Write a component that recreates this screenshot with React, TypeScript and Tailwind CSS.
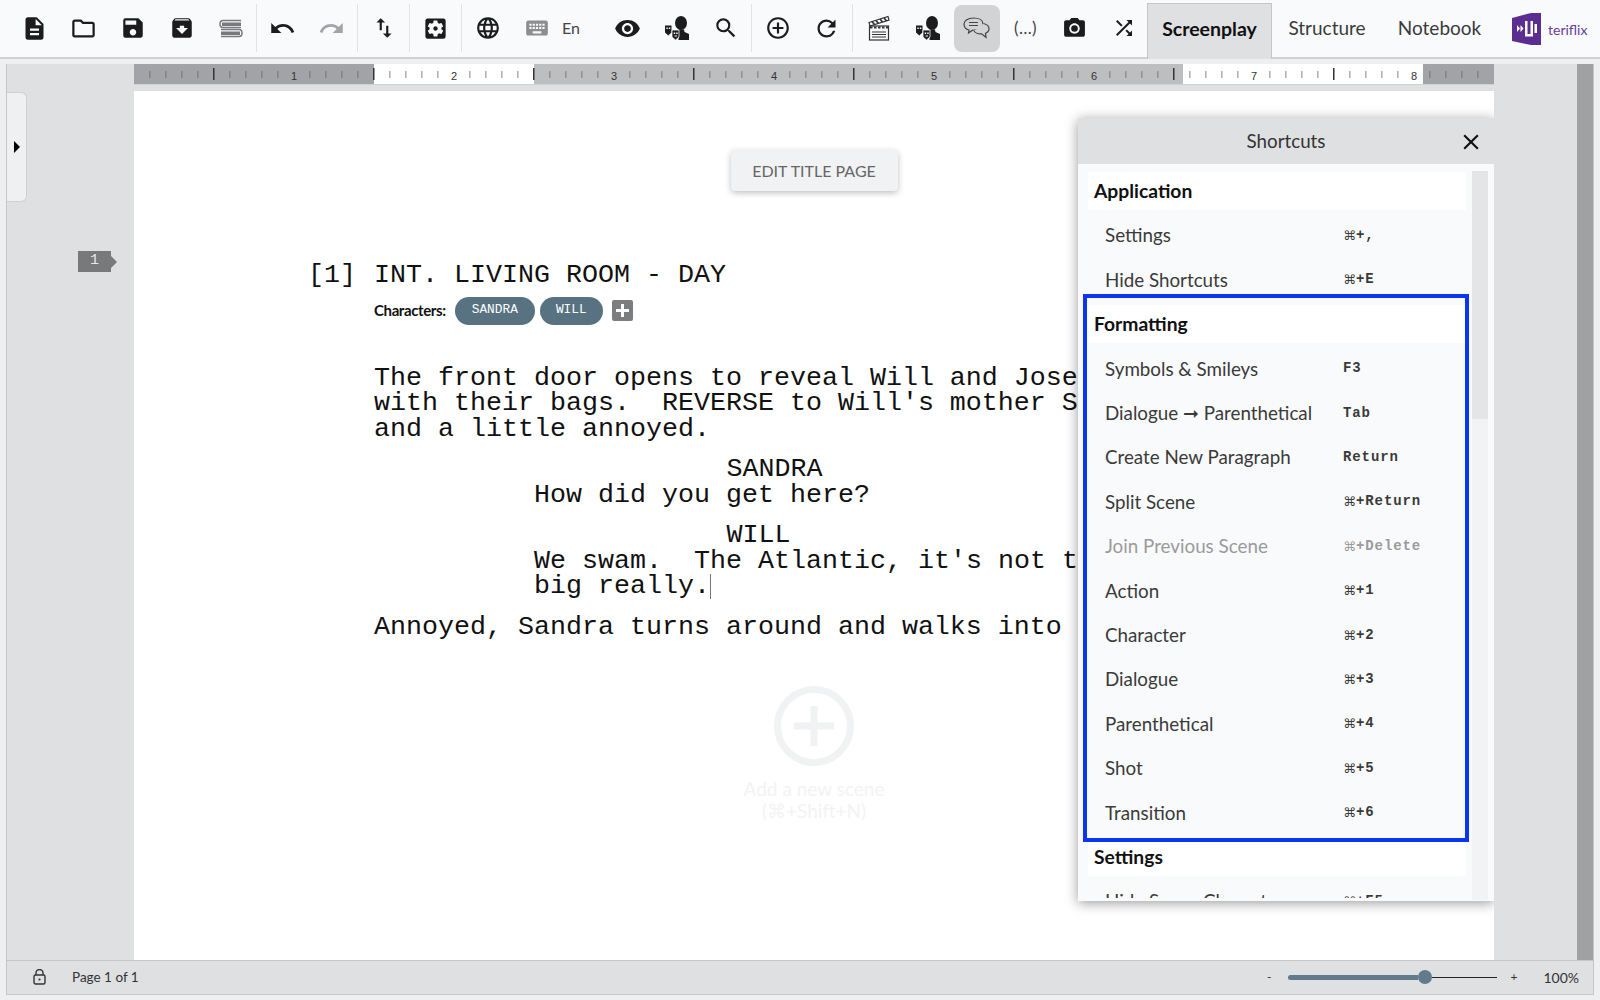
import React from 'react';
import {
  MdDescription,
  MdOutlineFolder,
  MdSave,
  MdArchive,
  MdUndo,
  MdRedo,
  MdSwapVert,
  MdSettingsApplications,
  MdLanguage,
  MdKeyboard,
  MdRemoveRedEye,
  MdSearch,
  MdAddCircleOutline,
  MdRefresh,
  MdPhotoCamera,
  MdShuffle,
  MdClose,
} from 'react-icons/md';

const uiFont = "font-['Lato','Open_Sans',sans-serif]";
const monoFont = "font-['Liberation_Mono','DejaVu_Sans',monospace]";

type Row = { label: string; keys?: string; muted?: boolean };

const shortcuts: Row[] = [
  { label: 'Application' },
  { label: 'Settings', keys: '+,' },
  { label: 'Hide Shortcuts', keys: '+E' },
  { label: 'Formatting' },
  { label: 'Symbols & Smileys', keys: 'F3' },
  { label: 'Dialogue ➞ Parenthetical', keys: 'Tab' },
  { label: 'Create New Paragraph', keys: 'Return' },
  { label: 'Split Scene', keys: '+Return' },
  { label: 'Join Previous Scene', keys: '+Delete', muted: true },
  { label: 'Action', keys: '+1' },
  { label: 'Character', keys: '+2' },
  { label: 'Dialogue', keys: '+3' },
  { label: 'Parenthetical', keys: '+4' },
  { label: 'Shot', keys: '+5' },
  { label: 'Transition', keys: '+6' },
  { label: 'Settings' },
  { label: 'Hide Scene Characters', keys: '+F5' },
];

const BooksIcon = () => (
  <svg width="24" height="19" viewBox="0 0 24 19" fill="none" stroke="#77797b">
    <path d="M22 1.500H4C0 1.500 0 8.500 4 8.500h18" strokeWidth="1.500" />
    <rect x="3" y="3.500" width="19" height="3.500" fill="#77797b" stroke="none" />
    <path d="M2 10.500h18c4 0 4 7 0 7H2" strokeWidth="1.500" />
    <rect x="2" y="12.500" width="19" height="3.500" fill="#77797b" stroke="none" />
  </svg>
);

const MasksPersonIcon = () => (
  <svg width="24" height="24" viewBox="0 0 24 24" fill="#1c1c1e">
    <ellipse cx="16" cy="7" rx="6" ry="7" />
    <path d="M13 13.500h6l.5 2.500 4.500 2v6H13.500l.5-8z" />
    <path d="M0 9.500h6.500v7l-3.200 3-3.300-3z" />
    <path d="M7 14h7v7l-3.500 3L7 21z" stroke="#f9fafc" strokeWidth="0.800" />
    <rect x="1.300" y="11.500" width="1.500" height="1.500" fill="#f9fafc" />
    <rect x="3.800" y="11.500" width="1.500" height="1.500" fill="#f9fafc" />
    <rect x="8.700" y="16.500" width="1.500" height="1.500" fill="#f9fafc" />
    <rect x="11.200" y="16.500" width="1.500" height="1.500" fill="#f9fafc" />
    <rect x="9.500" y="19.500" width="2.500" height="1" fill="#f9fafc" />
  </svg>
);

const ClapperIcon = () => (
  <svg width="22" height="26" viewBox="0 0 22 26" fill="none" stroke="#333" strokeWidth="1.200">
    <path d="M1 7.500L20 1.500l1 3.500-19 6z" fill="#fff" />
    <path d="M4 6.500l2.500 3M8 5.500l2.500 3M12 4l2.500 3M16 3l2.500 3" strokeWidth="1.800" />
    <rect x="1.500" y="11" width="19" height="14" />
    <path d="M2 12.500h18" strokeWidth="2" strokeDasharray="2.500 1.500" />
    <path d="M4 17h14M4 19.500h14M4 22h14" />
  </svg>
);

const ChatIcon = () => (
  <svg width="27" height="24" viewBox="0 0 27 24" fill="none" stroke="#444" strokeWidth="1.200">
    <path d="M10.500 2C5 2 1 4.500 1 8s3 5.500 5 6l-.5 3 4-2.800c6 .3 10.500-2.200 10.500-6.200S16 2 10.500 2z" fill="#d2d3d5" />
    <path d="M6 6.500h9M6 9.500h9" />
    <path d="M20.500 7.500c3.500.8 5.500 2.800 5.500 5.300 0 2.200-1.500 3.700-3.500 4.500l.5 4-4.500-3.500c-3 .2-6-.6-7.500-2.800" fill="#d2d3d5" />
  </svg>
);

const LockIcon = () => (
  <svg width="13" height="16" viewBox="0 0 13 16" fill="none" stroke="#333" strokeWidth="1.400">
    <path d="M3 6V4a3.500 3.500 0 0 1 7 0v2" />
    <rect x="1" y="6" width="11" height="9" rx="1.500" />
    <circle cx="6.500" cy="10.500" r="1.100" fill="#333" stroke="none" />
  </svg>
);

const Logo = () => (
  <svg width="30" height="32" viewBox="0 0 30 32">
    <path d="M0 5l19-5h10v32H19L0 28z" fill="#5c2d91" />
    <path d="M5 12v7l3-3.500zM8.500 12v7l3-3.500z" fill="#fff" />
    <path d="M13 8h2.500v13h3V8H21v15.500h-8zM22.500 11H25v9h-2.500z" fill="#fff" />
  </svg>
);

const ToolBtn = ({ children, active }: { children: React.ReactNode; active?: boolean }) => (
  <div className="w-[49px] h-[50px] flex items-center justify-center shrink-0">
    <div className={`w-[46px] h-[47px] rounded-lg flex items-center justify-center ${active ? 'bg-[#d2d3d5]' : ''}`}>
      {children}
    </div>
  </div>
);

const Sep = () => <div className="w-px h-[48px] bg-[#e2e3e5] mx-px shrink-0" />;

const Toolbar = () => (
  <div className="h-[59px] bg-[#f9fafc] border-b-2 border-[#cfd0d2] flex items-end shrink-0 pl-[10px]">
    <div className="flex items-center h-[52px] mb-[3px] text-[#1c1c1e]">
      <ToolBtn><MdDescription size={27} /></ToolBtn>
      <ToolBtn><MdOutlineFolder size={27} /></ToolBtn>
      <ToolBtn><MdSave size={26} /></ToolBtn>
      <ToolBtn><MdArchive size={26} /></ToolBtn>
      <ToolBtn><BooksIcon /></ToolBtn>
      <Sep />
      <ToolBtn><MdUndo size={27} /></ToolBtn>
      <ToolBtn><MdRedo size={27} className="text-[#a3a4a7]" /></ToolBtn>
      <Sep />
      <ToolBtn><MdSwapVert size={26} /></ToolBtn>
      <Sep />
      <ToolBtn><MdSettingsApplications size={27} /></ToolBtn>
      <Sep />
      <ToolBtn><MdLanguage size={26} /></ToolBtn>
      <ToolBtn><MdKeyboard size={26} className="text-[#8d8e90]" /></ToolBtn>
      <div className="w-[20px] mr-[22px] text-[16px] text-[#444] text-center">En</div>
      <ToolBtn><MdRemoveRedEye size={27} /></ToolBtn>
      <ToolBtn><MasksPersonIcon /></ToolBtn>
      <ToolBtn><MdSearch size={26} /></ToolBtn>
      <Sep />
      <ToolBtn><MdAddCircleOutline size={26} /></ToolBtn>
      <ToolBtn><MdRefresh size={27} /></ToolBtn>
      <Sep />
      <ToolBtn><ClapperIcon /></ToolBtn>
      <ToolBtn><MasksPersonIcon /></ToolBtn>
      <ToolBtn active><ChatIcon /></ToolBtn>
      <ToolBtn><span className="text-[17px] text-[#444] tracking-wide">(…)</span></ToolBtn>
      <ToolBtn><MdPhotoCamera size={25} /></ToolBtn>
      <ToolBtn><MdShuffle size={24} /></ToolBtn>
    </div>
    <div className="w-[125px] h-[56px] mb-[-2px] ml-[-1px] pb-[5px] bg-[#dfe0e2] border-x border-t border-[#c5c6c8] flex items-center justify-center text-[19.500px] font-bold text-[#111]">
      Screenplay
    </div>
    <div className="flex h-[56px] mb-[-2px] pb-[5px] items-center text-[19px] text-[#3a3a3a]">
      <span className="w-[110px] text-center">Structure</span>
      <span className="w-[115px] text-center">Notebook</span>
    </div>
    <div className="flex items-center h-[52px] mb-[2px] ml-[15px] gap-[6px]">
      <Logo />
      <span className="text-[14px] text-[#6a3d9a]">teriflix</span>
    </div>
  </div>
);

const Ruler = () => {
  const ticks = Array.from({ length: 84 }, (_, i) => i * 16 + 15.5);
  return (
    <svg width="1360" height="21" viewBox="0 0 1360 21" className="block shrink-0">
      <rect width="1360" height="21" fill="#bdbec0" />
      <rect width="240" height="21" fill="#a2a3a6" />
      <rect x="240" width="160" height="21" fill="#fff" />
      <rect x="1049" width="240" height="21" fill="#fff" />
      <rect x="1289" width="71" height="21" fill="#a2a3a6" />
      <rect y="20" width="1360" height="1" fill="#cfd0d2" />
      {ticks.map((x, i) => {
        const major = (i - 4) % 10 === 0 && i >= 4;
        const label = (i - 9) % 10 === 0;
        if (label) return null;
        return (
          <rect
            key={x}
            x={x - (major ? 0.5 : 0)}
            y={major ? 4 : 7}
            width={major ? 1.500 : 0.800}
            height={major ? 12 : 7}
            fill={major ? '#333' : '#666'}
          />
        );
      })}
      {[1, 2, 3, 4, 5, 6, 7, 8].map((n) => (
        <text key={n} x={160 * n} y={16} textAnchor="middle" fontSize="11" fill="#333" fontFamily="Liberation Sans">
          {n}
        </text>
      ))}
    </svg>
  );
};

// the command sign is a bigger glyph than the mono text next to it
const Keys = ({ row }: { row: Row }) => {
  const withCmd = row.keys?.startsWith('+');
  return (
    <span className={`${monoFont} text-[14px] font-bold tracking-[0.9px] flex items-center`}>
      {withCmd && <span className="font-['DejaVu_Sans',sans-serif] font-normal text-[13px] leading-none tracking-normal">⌘</span>}
      {row.keys}
    </span>
  );
};

const ShortcutsPanel = () => (
  <div className={`absolute right-0 top-[27px] w-[416px] h-[783px] bg-[#f9fafb] shadow-[0_2px_12px_rgba(0,0,0,0.4)] flex flex-col ${uiFont}`}>
    <div className="h-[46px] shrink-0 bg-[#dfe0e2] relative flex items-center justify-center text-[18.800px] text-[#333]">
      Shortcuts
      <MdClose size={26} className="absolute right-[10px] top-[11px] text-[#111]" />
    </div>
    <div className="flex-1 flex overflow-hidden pt-[5px] pb-[3px] pl-[10px]">
      <div className="w-[378px] h-full overflow-hidden">
        {shortcuts.map((row, i) =>
          row.keys ? (
            <div
              key={i}
              className={`h-[44.400px] flex items-center pl-[17px] text-[18.800px] ${row.muted ? 'text-[#9a9b9d]' : 'text-[#3a3a3a]'}`}
            >
              <span className="w-[238px]">{row.label}</span>
              <Keys row={row} />
            </div>
          ) : (
            <div key={i} className="h-[44.400px] flex items-center">
              <div className="w-full h-[38px] bg-white flex items-center pl-[6px] text-[19.300px] font-bold text-[#111]">
                {row.label}
              </div>
            </div>
          ),
        )}
      </div>
      <div className="w-[16px] ml-[6px] mt-[2px] h-full bg-[#f2f3f5]">
        <div className="h-[248px] bg-[#e4e5e7]" />
      </div>
    </div>
    <div className="absolute left-[5px] top-[176px] w-[386px] h-[548px] border-[4px] border-[#0a36f0]" />
  </div>
);

const Page = () => (
  <div className="relative flex-1 bg-white mt-[6px] overflow-hidden">
    <div className={`flex justify-center pt-[59px] ${uiFont}`}>
      <div className="w-[167px] h-[41px] bg-[#f1f2f3] rounded-sm shadow-[0_2px_6px_rgba(0,0,0,0.25)] flex items-center justify-center text-[16px] text-[#666]">
        EDIT TITLE PAGE
      </div>
    </div>
    <div className={`pl-[240px] pt-[72px] ${monoFont} text-[26.670px] leading-[25.500px] text-[#111] whitespace-pre`}>
      <div className="ml-[-66px]"><span className="mr-[2px]">[1]</span> INT. LIVING ROOM - DAY</div>
      <div className={`flex items-center mt-[8px] h-[28px] ${uiFont}`}>
        <span className="text-[15px] font-bold tracking-tight text-[#111] mr-[9px]">Characters:</span>
        <span className={`w-[80px] h-[28px] rounded-full bg-[#587282] text-white text-[12.800px] leading-none flex items-center justify-center ${monoFont}`}>SANDRA</span>
        <span className={`w-[63px] h-[28px] ml-[5px] rounded-full bg-[#587282] text-white text-[12.800px] leading-none flex items-center justify-center ${monoFont}`}>WILL</span>
        <span className="w-[21px] h-[21px] ml-[9px] rounded-[2px] bg-[#7b7d7f] text-white flex items-center justify-center">
          <svg width="13" height="13" viewBox="0 0 13 13" fill="#fff">
            <path d="M5 0h3v5h5v3H8v5H5V8H0V5h5z" />
          </svg>
        </span>
      </div>
      <div className="mt-[41px]">
        <div>The front door opens to reveal Will and Joseph</div>
        <div>with their bags.  REVERSE to Will's mother Sandra</div>
        <div>and a little annoyed.</div>
      </div>
      <div className="mt-[15px] pl-[352.500px]">SANDRA</div>
      <div className="pl-[160px]">How did you get here?</div>
      <div className="mt-[15px] pl-[352.500px]">WILL</div>
      <div className="pl-[160px]">We swam.  The Atlantic, it's not that</div>
      <div className="pl-[160px] flex items-center">
        big really.
        <span className="w-px h-[25px] bg-[#777]" />
      </div>
      <div className="mt-[15px]">Annoyed, Sandra turns around and walks into the house.</div>
    </div>
    <div className={`flex flex-col items-center mt-[46px] text-[19px] leading-[22px] text-[#f2f3f4] ${uiFont}`}>
      <svg width="80" height="80" viewBox="0 0 80 80" fill="none" stroke="#f1f2f3" strokeWidth="7" className="mb-[12px]">
        <circle cx="40" cy="40" r="36.500" />
        <path d="M40 20v40M20 40h40" />
      </svg>
      <span>Add a new scene</span>
      <span>(⌘+Shift+N)</span>
    </div>
    <ShortcutsPanel />
  </div>
);

const StatusBar = () => (
  <div className={`h-[34px] shrink-0 border-t border-[#c5c6c8] flex items-center text-[#333] pb-[1px] ${uiFont}`}>
    <div className="w-[65px] flex justify-center"><LockIcon /></div>
    <span className="text-[13.500px]">Page 1 of 1</span>
    <div className="ml-auto flex items-center">
      <span className="text-[12px] mr-[17px]">-</span>
      <div className="w-[209px] flex items-center">
        <div className="w-[130px] h-[5px] rounded-l bg-[#5f7b8c]" />
        <div className="w-[14px] h-[14px] rounded-full bg-[#5f7b8c]" />
        <div className="flex-1 h-px bg-[#222]" />
      </div>
      <span className="text-[12px] ml-[13px] mr-[26px]">+</span>
      <span className="text-[14px] mr-[14px]">100%</span>
    </div>
  </div>
);

export default function App() {
  return (
    <div className={`h-screen bg-[#eeeff0] flex flex-col overflow-hidden ${uiFont}`}>
      <Toolbar />
      <div className="flex-1 min-h-0 mx-[6px] mt-[5px] mb-[5px] border-x border-b border-[#c5c6c8] bg-[#dee0e2] flex flex-col">
        <div className="flex-1 min-h-0 flex">
          <div className="w-[127px] shrink-0 flex flex-col">
            <div className="w-[20px] h-[110px] mt-[28px] bg-[#eef0f2] border border-l-0 border-[#cfd0d2] rounded-r-md flex items-center">
              <div className="ml-[7px] border-y-[6px] border-l-[6px] border-y-transparent border-l-black" />
            </div>
            <div className="mt-[49px] ml-[71px] flex items-center">
              <div className={`w-[33px] h-[21px] bg-[#77797b] text-[#e8e8e8] text-[15px] flex items-center justify-center ${monoFont}`}>1</div>
              <div className="border-y-[6px] border-l-[6px] border-y-transparent border-l-[#77797b]" />
            </div>
          </div>
          <div className="w-[1360px] shrink-0 flex flex-col">
            <Ruler />
            <Page />
          </div>
          <div className="ml-auto w-[16px] bg-[#9fa1a3]" />
        </div>
        <StatusBar />
      </div>
    </div>
  );
}
